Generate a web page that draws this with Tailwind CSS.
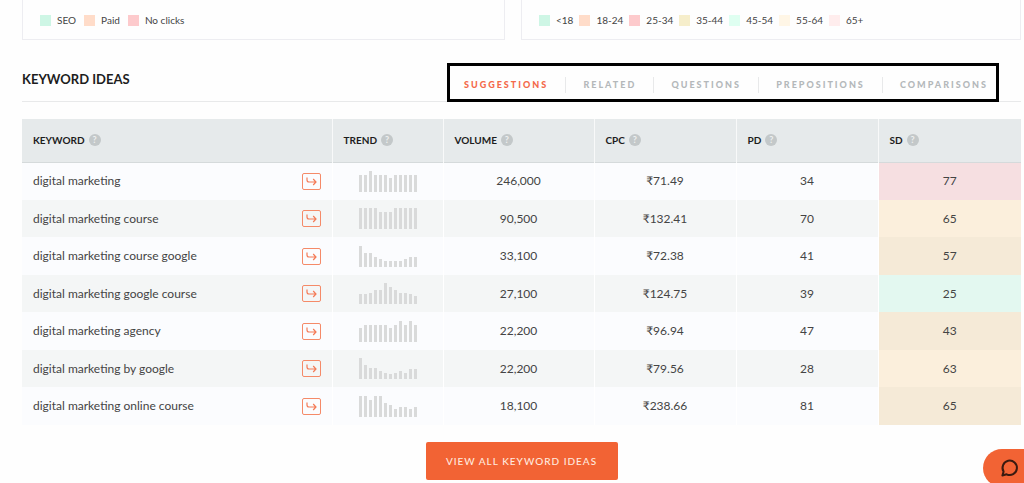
<!DOCTYPE html>
<html lang="en">
<head>
  <meta charset="UTF-8" />
  <title>Keyword Ideas</title>
  <meta name="viewport" content="width=device-width, initial-scale=1.0" />
  <script src="https://cdn.jsdelivr.net/npm/@tailwindcss/browser@4"></script>
</head>
<body class="bg-[#fefefe] text-[#444] font-['Lato',sans-serif] overflow-hidden">

<main class="pl-[22px] pr-[3px]">

  <!-- Chart legends -->
  <section class="flex gap-4">
    <ul class="w-[483px] h-10 shrink-0 flex items-start gap-2 px-[17px] pt-3 border border-t-0 border-[#ededf1] text-[10px] leading-4">
      <li class="flex items-center gap-[6px]"><span class="size-[11px] bg-[#cef6e5]"></span>SEO</li>
      <li class="flex items-center gap-[6px]"><span class="size-[11px] bg-[#ffdcc9]"></span>Paid</li>
      <li class="flex items-center gap-[6px]"><span class="size-[11px] bg-[#fdcacc]"></span>No clicks</li>
    </ul>
    <ul class="flex-1 h-10 flex items-start gap-[6px] px-[17px] pt-3 border border-t-0 border-[#ededf1] text-[10px] leading-4">
      <li class="flex items-center gap-[6px]"><span class="size-[11px] bg-[#cef6e5]"></span>&lt;18</li>
      <li class="flex items-center gap-[6px]"><span class="size-[11px] bg-[#ffdcc9]"></span>18-24</li>
      <li class="flex items-center gap-[6px]"><span class="size-[11px] bg-[#fdcacc]"></span>25-34</li>
      <li class="flex items-center gap-[6px]"><span class="size-[11px] bg-[#f6eecb]"></span>35-44</li>
      <li class="flex items-center gap-[6px]"><span class="size-[11px] bg-[#dffff1]"></span>45-54</li>
      <li class="flex items-center gap-[6px]"><span class="size-[11px] bg-[#fff6e6]"></span>55-64</li>
      <li class="flex items-center gap-[6px]"><span class="size-[11px] bg-[#ffeded]"></span>65+</li>
    </ul>
  </section>

  <!-- Heading and tabs -->
  <header class="mt-[23px] flex justify-between items-start border-b border-[#e8e9ea] pr-[22px]">
    <h2 class="pt-[6px] text-[13px] leading-5 font-bold text-[#1d1d1d]">KEYWORD IDEAS</h2>
    <nav class="-mb-px w-[552px] h-[39px] flex items-center justify-between border-[3px] border-black bg-[#fefefe] pt-1 pl-[14px] pr-2 text-[9px] leading-4 font-black tracking-[2px] text-[#b4b8ba]">
      <button class="text-[#f4694a]">SUGGESTIONS</button>
      <span class="w-px h-4 bg-[#e8e9ea]"></span>
      <button>RELATED</button>
      <span class="w-px h-4 bg-[#e8e9ea]"></span>
      <button>QUESTIONS</button>
      <span class="w-px h-4 bg-[#e8e9ea]"></span>
      <button>PREPOSITIONS</button>
      <span class="w-px h-4 bg-[#e8e9ea]"></span>
      <button>COMPARISONS</button>
    </nav>
  </header>

  <!-- Keyword table -->
  <table class="mt-[17px] w-full table-fixed border-collapse text-[12px] leading-4">
    <thead>
      <tr id="keyword-head" class="h-[43px] bg-[#e6eaeb] border-b border-[#d5dadb] text-left text-[10px] text-[#1d1d1d]"></tr>
    </thead>
    <tbody id="keyword-rows"></tbody>
  </table>

  <div class="mt-[17px] flex justify-center">
    <button class="h-[38px] w-[192px] rounded-xs bg-[#f26334] text-[10px] font-medium tracking-widest text-[#ffe9df] whitespace-nowrap">VIEW ALL KEYWORD IDEAS</button>
  </div>
</main>

<!-- Chat launcher -->
<button aria-label="Open chat" class="fixed right-0 -bottom-1 h-[38px] w-[41px] rounded-l-full bg-[#f26334] pl-[17px]">
  <svg class="size-5" viewBox="0 0 20 20" fill="none" stroke="#3a1a10" stroke-width="2" stroke-linejoin="round">
    <path d="M3.6 13.6A7.2 7.2 0 1 1 6.6 16.3L2.4 17.5Z" />
  </svg>
</button>

<script>
  const columns = [
    ['KEYWORD', ''],
    ['TREND', 'w-[111px]'],
    ['VOLUME', 'w-[151px]'],
    ['CPC', 'w-[142px]'],
    ['PD', 'w-[142px]'],
    ['SD', 'w-[143px]'],
  ];

  // keyword, monthly trend, volume, cpc, pd, sd, sd colour
  const rows = [
    ['digital marketing', [17,17,21,17,17,17,14,17,17,17,17,17], '246,000', '₹71.49', 34, 77, 'bg-[#f6dfe1]'],
    ['digital marketing course', [21,21,21,21,17,17,17,21,21,21,21,21], '90,500', '₹132.41', 70, 65, 'bg-[#fbefdc]'],
    ['digital marketing course google', [21,14,14,10,8,6,6,6,6,8,10,10], '33,100', '₹72.38', 41, 57, 'bg-[#f5ead7]'],
    ['digital marketing google course', [10,10,11,14,14,21,17,14,11,11,10,8], '27,100', '₹124.75', 39, 25, 'bg-[#e3f8f0]'],
    ['digital marketing agency', [14,17,17,17,17,17,14,17,21,17,21,17], '22,200', '₹96.94', 47, 43, 'bg-[#f5ead7]'],
    ['digital marketing by google', [21,14,11,11,8,6,5,6,8,6,10,10], '22,200', '₹79.56', 28, 63, 'bg-[#fbefdc]'],
    ['digital marketing online course', [21,21,17,21,21,14,12,8,10,10,8,10], '18,100', '₹238.66', 81, 65, 'bg-[#f5ead7]'],
  ];

  document.getElementById('keyword-head').innerHTML = columns.map(([name, width]) => `
    <th scope="col" class="${width} pl-[11px] border-r border-r-[#f8f9f9] last:border-r-0">
      <span class="flex items-center gap-1 font-bold">${name}
        <span class="size-3 rounded-full bg-[#c3c8c9] text-center text-[9px] leading-3 text-[#eef0f0]">?</span>
      </span>
    </th>`).join('');

  document.getElementById('keyword-rows').innerHTML = rows.map(([keyword, trend, volume, cpc, pd, sd, colour]) => `
    <tr class="h-[38px] even:h-[37px] bg-[#fbfcfe] even:bg-[#f4f6f6] text-center">
      <td class="pl-[11px] pr-[11px] border-r border-white">
        <div class="flex items-center justify-between">
          <a href="#" class="text-[#444]">${keyword}</a>
          <button aria-label="Open ${keyword}" class="w-[19px] h-[17px] rounded-xs border border-[#f58a68] flex items-center justify-center">
            <svg class="w-[11px] h-[9px]" viewBox="0 0 11 9" fill="none" stroke="#f47a56" stroke-width="1.2">
              <path d="M1 .5v2.5q0 2 2 2h7M7.2 2l2.8 3-2.8 3" />
            </svg>
          </button>
        </div>
      </td>
      <td class="border-r border-white">
        <div class="h-[21px] flex items-end justify-center gap-[2px]">
          ${trend.map(h => `<span class="w-[3px] bg-[#d9dada]" style="height:${h}px"></span>`).join('')}
        </div>
      </td>
      <td class="border-r border-white">${volume}</td>
      <td class="border-r border-white">${cpc}</td>
      <td class="border-r border-white">${pd}</td>
      <td class="${colour}">${sd}</td>
    </tr>`).join('');
</script>

</body>
</html>
